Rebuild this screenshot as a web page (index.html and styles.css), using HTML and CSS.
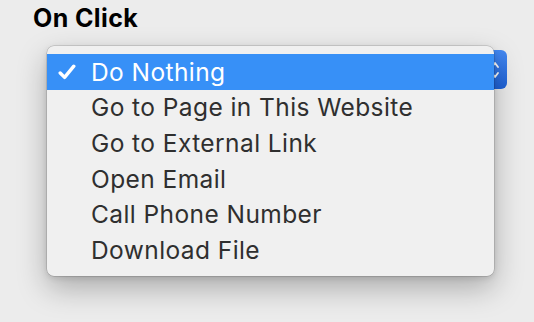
FILE: index.html
```html
<!DOCTYPE html>
<html>
<head>
<meta charset="utf-8">
<link rel="stylesheet" href="styles.css">
</head>
<body>
<div class="panel">
  <div class="label">On Click</div>
  <div class="field">
    <div class="select">
      <span class="select-value">Do Nothing</span>
      <span class="stepper">
        <svg width="10" height="22" viewBox="0 0 10 22"><path d="M2 8 L5 4 L8 8" fill="none" stroke="#fff" stroke-width="1.8" stroke-linecap="round" stroke-linejoin="round"/><path d="M2 14 L5 18 L8 14" fill="none" stroke="#fff" stroke-width="1.8" stroke-linecap="round" stroke-linejoin="round"/></svg>
      </span>
    </div>
    <ul class="menu">
      <li class="item selected">
        <span class="check"><svg width="18" height="16" viewBox="0 0 18 16"><path d="M2.2 9 L6.6 13.4 L15.8 2.2" fill="none" stroke="#fff" stroke-width="3.4" stroke-linecap="round" stroke-linejoin="round"/></svg></span>
        <span class="text">Do Nothing</span>
      </li>
      <li class="item"><span class="check"></span><span class="text">Go to Page in This Website</span></li>
      <li class="item"><span class="check"></span><span class="text">Go to External Link</span></li>
      <li class="item"><span class="check"></span><span class="text">Open Email</span></li>
      <li class="item"><span class="check"></span><span class="text">Call Phone Number</span></li>
      <li class="item"><span class="check"></span><span class="text">Download File</span></li>
    </ul>
  </div>
</div>
</body>
</html>
```

FILE: styles.css
```css
html, body {
  margin: 0;
  padding: 0;
  background: #ececec;
  width: 534px;
  height: 322px;
  overflow: hidden;
}

body {
  font-family: Inter, "Liberation Sans", sans-serif;
}

.panel {
  padding: 4px 0 0 33px;
}

.label {
  font-weight: 700;
  font-size: 25px;
  line-height: 28px;
  color: #000;
  letter-spacing: 0.4px;
}

.field {
  position: relative;
  margin-top: 18px;
  width: 474px;
}

.select {
  margin-left: 21px;
  height: 39px;
  border-radius: 6px;
  background: linear-gradient(#4489f2, #1f62d8);
  display: flex;
  align-items: center;
  justify-content: flex-end;
  color: #fff;
  font-size: 24px;
}

.select-value {
  flex: 1;
  padding-left: 10px;
  visibility: hidden;
}

.stepper {
  width: 17px;
  display: flex;
  justify-content: flex-start;
}

.menu {
  position: absolute;
  left: 14px;
  top: -4px;
  width: 447px;
  margin: 0;
  padding: 8px 0;
  list-style: none;
  background: #f0f0f0;
  border-radius: 7px;
  box-shadow: 0 0 0 0.5px rgba(0,0,0,0.22), 0 12px 30px rgba(0,0,0,0.28), 0 2px 6px rgba(0,0,0,0.12);
}

.item {
  display: flex;
  align-items: center;
  height: 35.6px;
  font-size: 24.5px;
  font-weight: 400;
  color: #2f2f2f;
  letter-spacing: 0.42px;
}

.item.selected {
  background: #3790f7;
  color: #fff;
}

.check {
  width: 44px;
  padding-left: 11px;
  box-sizing: border-box;
  display: flex;
  align-items: center;
}

.text {
  white-space: nowrap;
}
```
